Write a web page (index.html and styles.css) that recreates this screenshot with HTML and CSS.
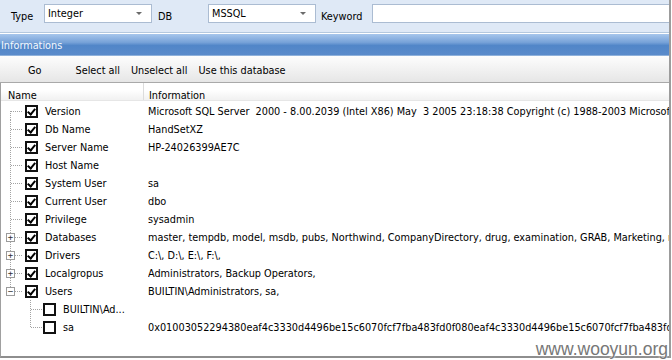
FILE: index.html
```html
<!DOCTYPE html>
<html lang="en">
<head>
  <meta charset="UTF-8">
  <title>Informations</title>
  <link rel="stylesheet" href="styles.css">
</head>
<body>
  <div class="window">
    <div class="filter">
      <span class="lbl lbl-type">Type</span>
      <div class="combo combo-type">Integer<span class="arrow"></span></div>
      <span class="lbl lbl-db">DB</span>
      <div class="combo combo-db">MSSQL<span class="arrow"></span></div>
      <span class="lbl lbl-kw">Keyword</span>
      <div class="textbox"></div>
    </div>

    <div class="panel">
      <div class="panel-title">Informations</div>
      <div class="toolbar">
        <span class="tool tool-go">Go</span>
        <span class="tool">Select all</span>
        <span class="tool">Unselect all</span>
        <span class="tool">Use this database</span>
      </div>

      <div class="grid">
        <div class="grid-head">
          <div class="col-name">Name</div>
          <div class="col-info">Information</div>
        </div>
        <div class="grid-body">
          <div class="row">
            <div class="name"><span class="branch first"></span><span class="chk on"></span>Version</div>
            <div class="info">Microsoft SQL Server&nbsp; 2000 - 8.00.2039 (Intel X86) May&nbsp; 3 2005 23:18:38 Copyright (c) 1988-2003 Microsoft Corporation</div>
          </div>
          <div class="row">
            <div class="name"><span class="branch"></span><span class="chk on"></span>Db Name</div>
            <div class="info">HandSetXZ</div>
          </div>
          <div class="row">
            <div class="name"><span class="branch"></span><span class="chk on"></span>Server Name</div>
            <div class="info">HP-24026399AE7C</div>
          </div>
          <div class="row">
            <div class="name"><span class="branch"></span><span class="chk on"></span>Host Name</div>
            <div class="info"></div>
          </div>
          <div class="row">
            <div class="name"><span class="branch"></span><span class="chk on"></span>System User</div>
            <div class="info">sa</div>
          </div>
          <div class="row">
            <div class="name"><span class="branch"></span><span class="chk on"></span>Current User</div>
            <div class="info">dbo</div>
          </div>
          <div class="row">
            <div class="name"><span class="branch"></span><span class="chk on"></span>Privilege</div>
            <div class="info">sysadmin</div>
          </div>
          <div class="row">
            <div class="name"><span class="branch"><span class="expander">+</span></span><span class="chk on"></span>Databases</div>
            <div class="info">master, tempdb, model, msdb, pubs, Northwind, CompanyDirectory, drug, examination, GRAB, Marketing, mydb</div>
          </div>
          <div class="row">
            <div class="name"><span class="branch"><span class="expander">+</span></span><span class="chk on"></span>Drivers</div>
            <div class="info">C:\, D:\, E:\, F:\,</div>
          </div>
          <div class="row">
            <div class="name"><span class="branch"><span class="expander">+</span></span><span class="chk on"></span>Localgropus</div>
            <div class="info">Administrators, Backup Operators,</div>
          </div>
          <div class="row">
            <div class="name"><span class="branch last"><span class="expander">&minus;</span></span><span class="chk on"></span>Users</div>
            <div class="info">BUILTIN\Administrators, sa,</div>
          </div>
          <div class="row">
            <div class="name"><span class="branch child"></span><span class="chk"></span>BUILTIN\Ad...</div>
            <div class="info"></div>
          </div>
          <div class="row">
            <div class="name"><span class="branch child last"></span><span class="chk"></span>sa</div>
            <div class="info">0x01003052294380eaf4c3330d4496be15c6070fcf7fba483fd0f080eaf4c3330d4496be15c6070fcf7fba483fd0f080</div>
          </div>
        </div>
      </div>
    </div>
  </div>

  <div class="watermark">www.wooyun.org</div>
</body>
</html>
```

FILE: styles.css
```css
body {
  margin: 0;
  width: 672px;
  height: 360px;
  overflow: hidden;
  position: relative;
  background: #fff;
  font-family: 'DejaVu Sans Condensed', 'DejaVu Sans', sans-serif;
  font-stretch: condensed;
  font-size: 10.8px;
  color: #000;
}
.window {
  width: 669px;
  border-right: 2px solid #9c9c9c;
}

/* filter bar */
.filter {
  height: 33px;
  background: #dfe9f6;
  border-bottom: 1px solid #b4c8de;
  display: flex;
  align-items: flex-start;
  padding-top: 4px;
  box-sizing: border-box;
}
.lbl {
  line-height: 19px;
  margin-top: 3px;
}
.lbl-type { margin-left: 11px; width: 33px; }
.lbl-db { margin-left: 6px; width: 50px; }
.lbl-kw { margin-left: 5px; width: 51px; }
.combo, .textbox {
  height: 19px;
  box-sizing: border-box;
  background: #fff;
  border: 1px solid #abbcd2;
  line-height: 16px;
  padding-left: 3px;
  display: flex;
  justify-content: space-between;
  align-items: center;
}
.combo-type { width: 108px; }
.combo-db { width: 108px; }
.textbox { flex: 1; border-right: none; }
.arrow {
  width: 0;
  height: 0;
  margin-right: 9px;
  border-left: 3px solid transparent;
  border-right: 3px solid transparent;
  border-top: 3px solid #6b6b6b;
}

/* panel */
.panel {
  margin-top: 1px;
}
.panel-title {
  height: 21px;
  line-height: 24px;
  padding-left: 1px;
  color: #f4f8fd;
  background: linear-gradient(to bottom, #a7c6ec 0, #77a2d8 40%, #5186c8 55%, #5a8bcb 100%);
  border-bottom: 1px solid #8fb1db;
}
.toolbar {
  height: 27px;
  display: flex;
  align-items: center;
  padding-top: 3px;
  box-sizing: border-box;
  background: linear-gradient(to bottom, #fdfdfd, #e6e6e6);
  border-bottom: 1px solid #a9a9a9;
}
.tool { margin-left: 11px; }
.tool-go { margin-left: 28px; margin-right: 23px; }

/* grid */
.grid {
  border-left: 1px solid #a0a0a0;
  border-bottom: 2px solid #8e8e8e;
}
.grid-head {
  height: 17px;
  display: flex;
  background: linear-gradient(to bottom, #fff 0, #fff 40%, #f1f1f1 100%);
  border-bottom: 1px solid #e6e6e6;
  line-height: 25px;
  overflow: hidden;
}
.col-name {
  width: 135px;
  padding-left: 7px;
  border-right: 1px solid #dcdcdc;
}
.col-info { padding-left: 5px; }
.grid-body {
  height: 255px;
  padding-top: 1px;
  box-sizing: border-box;
}
.row {
  height: 18px;
  display: flex;
  align-items: center;
  white-space: nowrap;
}
.name {
  width: 147px;
  flex: none;
  display: flex;
  align-items: center;
}
.info {
  overflow: hidden;
  flex: 1;
}

/* tree lines */
.branch {
  width: 24px;
  height: 18px;
  flex: none;
  display: flex;
  align-items: center;
  background:
    repeating-linear-gradient(to bottom, #a3a3a3 0 1px, transparent 1px 2px) 9px 0 / 1px 18px no-repeat,
    repeating-linear-gradient(to right, #a3a3a3 0 1px, transparent 1px 2px) 10px 9px / 12px 1px no-repeat;
}
.branch.first {
  background:
    repeating-linear-gradient(to bottom, #a3a3a3 0 1px, transparent 1px 2px) 9px 9px / 1px 9px no-repeat,
    repeating-linear-gradient(to right, #a3a3a3 0 1px, transparent 1px 2px) 10px 9px / 12px 1px no-repeat;
}
.branch.last {
  background:
    repeating-linear-gradient(to bottom, #a3a3a3 0 1px, transparent 1px 2px) 9px 0 / 1px 9px no-repeat,
    repeating-linear-gradient(to right, #a3a3a3 0 1px, transparent 1px 2px) 10px 9px / 12px 1px no-repeat;
}
.branch.child {
  width: 42px;
  background:
    repeating-linear-gradient(to bottom, #a3a3a3 0 1px, transparent 1px 2px) 29px 0 / 1px 18px no-repeat,
    repeating-linear-gradient(to right, #a3a3a3 0 1px, transparent 1px 2px) 30px 9px / 11px 1px no-repeat;
}
.branch.child.last {
  background:
    repeating-linear-gradient(to bottom, #a3a3a3 0 1px, transparent 1px 2px) 29px 0 / 1px 9px no-repeat,
    repeating-linear-gradient(to right, #a3a3a3 0 1px, transparent 1px 2px) 30px 9px / 11px 1px no-repeat;
}
.expander {
  width: 9px;
  height: 9px;
  box-sizing: border-box;
  margin-left: 5px;
  border: 1px solid #9b9b9b;
  background: #fff;
  font-family: 'DejaVu Sans Mono', monospace;
  font-size: 9px;
  line-height: 7px;
  text-align: center;
  color: #333;
}

/* checkboxes */
.chk {
  width: 13px;
  height: 13px;
  box-sizing: border-box;
  flex: none;
  border: 2px solid #111;
  background: #fff;
  margin-right: 7px;
  display: flex;
  justify-content: center;
}
.chk.on::after {
  content: "";
  width: 3px;
  height: 6px;
  border-right: 2px solid #000;
  border-bottom: 2px solid #000;
  transform: rotate(40deg);
}

.watermark {
  position: absolute;
  right: 4px;
  bottom: 0;
  font-family: 'Liberation Sans', Arial, sans-serif;
  font-stretch: normal;
  font-size: 17.5px;
  color: #777;
  text-shadow: 0 0 2px #fff, 0 0 2px #fff;
}
```
